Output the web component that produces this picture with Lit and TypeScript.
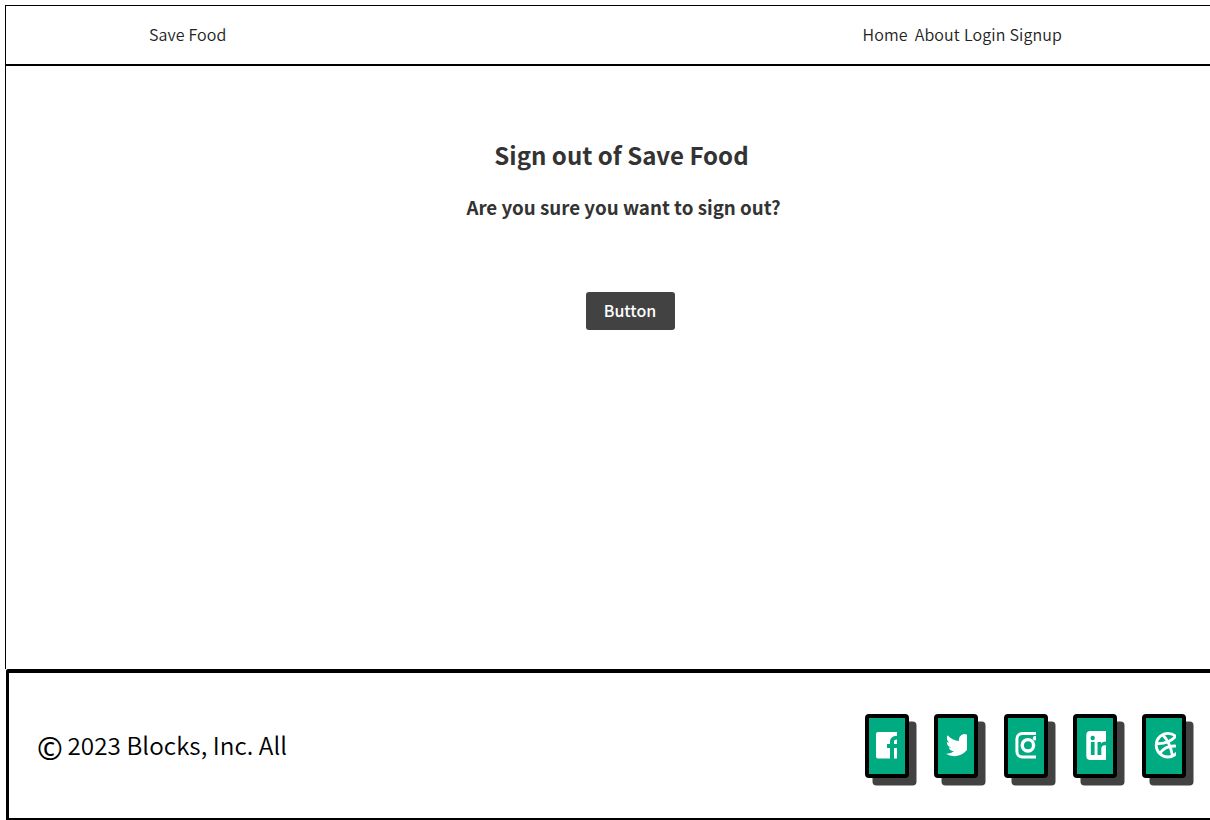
import { LitElement, html, svg, css } from "lit";
import { customElement } from "lit/decorators.js";

const facebook = svg`<path fill="#fff" d="M2 0H24V3.800C18 3 14 5.500 14 9.500V12H11v4h3v10.400H2Q0 26.400 0 24.400V2Q0 0 2 0ZM18 12V10Q18 7.600 21 7.600H24V12ZM18 16H24V26.400H18Z"/>`;
const twitter = svg`<path fill="#fff" transform="translate(.8 -.4) scale(1.128)" d="M23.953 4.570a10 10 0 0 1-2.825.775 4.958 4.958 0 0 0 2.163-2.723 9.990 9.990 0 0 1-3.127 1.184 4.920 4.920 0 0 0-8.384 4.482C7.690 8.095 4.067 6.130 1.640 3.162a4.822 4.822 0 0 0-.666 2.475c0 1.710.870 3.213 2.188 4.096a4.904 4.904 0 0 1-2.228-.616v.060a4.923 4.923 0 0 0 3.946 4.827 4.996 4.996 0 0 1-2.212.085 4.936 4.936 0 0 0 4.604 3.417 9.867 9.867 0 0 1-6.102 2.105c-.390 0-.779-.023-1.170-.067a13.995 13.995 0 0 0 7.557 2.209c9.053 0 13.998-7.496 13.998-13.985 0-.210 0-.420-.015-.630a9.935 9.935 0 0 0 2.460-2.548z"/>`;
const instagram = svg`<g fill="none" stroke="#fff"><rect x="1.900" y="1.500" width="23.500" height="23.500" rx="5.500" stroke-width="3"/><circle cx="12.900" cy="13.300" r="5.700" stroke-width="3.400"/></g><circle cx="20" cy="6.200" r="2.200" fill="#fff"/>`;
const linkedin = svg`<rect x="2.300" y="-1" width="29" height="29" rx="4" fill="#fff"/><g fill="#00ab82"><circle cx="8.700" cy="6" r="2.200"/><path d="M6.900 10h3.700v13H6.900ZM13.500 10h3.600v1.600C18.300 10 19.500 9.500 23 9.500V13.500C19 12.800 17.300 14 17.300 17v6h-3.800Z"/></g>`;
const dribbble = svg`<g fill="none" stroke="#fff" stroke-width="2.800"><circle cx="15" cy="13.200" r="11.800"/><path d="M9.500 2.500Q17.500 11 19.500 24M3 11.500Q15.500 12.500 22.500 4.500M6.500 22Q12.500 12 26.500 14.500"/></g>`;

const links = [
  { icon: facebook, width: 21 },
  { icon: twitter, width: 22 },
  { icon: instagram, width: 21.500 },
  { icon: linkedin, width: 22.300 },
  { icon: dribbble, width: 23 },
];

@customElement("app-root")
export class AppRoot extends LitElement {
  static styles = css`
    :host { display: block; font-family: "Noto Sans CJK SC", "Noto Sans", sans-serif; }
    * { box-sizing: border-box; }
    .page { height: 820px; padding: 5px 0 0 5px; overflow: hidden; display: flex; flex-direction: column; background: #fff; }
    header { height: 61px; flex: none; border: solid #000; border-width: 1px 0 2px 1px; padding: 0 148px 2px 143px; display: flex; align-items: center; justify-content: space-between; font-size: 16px; letter-spacing: .12px; line-height: 24px; font-weight: 350; color: #222; }
    nav { display: flex; gap: 4px; }
    .home { margin-right: 3px; }
    main { flex: 1; border-left: 1px solid #000; display: flex; flex-direction: column; align-items: center; color: #333; }
    h1 { margin: 71px 0 0 27px; font-size: 24.050px; line-height: 36px; font-weight: 700; }
    h2 { margin: 19px 0 0 31px; font-size: 18.750px; line-height: 30px; font-weight: 700; }
    .button { margin: 70px 0 0 44px; width: 89px; height: 38px; padding: 0 0 2px; border: 0; border-radius: 3px; background: #424242; color: #fff; font: 500 16px/24px "Noto Sans CJK SC", sans-serif; }
    footer { height: 151px; flex: none; margin-left: 1px; border: solid #000; border-width: 4px 0 2px 3px; border-radius: 3px 0 0 0; display: flex; justify-content: space-between; padding: 41px 23.800px 0 28px; }
    .copy { display: flex; gap: 6px; font-size: 24.250px; line-height: 38px; font-weight: 350; letter-spacing: .06px; color: #000; padding-top: 12px; white-space: nowrap; }
    .mark { font-family: "Noto Sans", sans-serif; font-size: 31px; line-height: 44px; font-weight: 400; width: 24.500px; }
    .social { display: flex; gap: 25.300px; }
    .tile { width: 44px; height: 64px; border: 4px solid #000; border-radius: 4px; background: #00ab82; box-shadow: 7.500px 7.500px 0 #424242; padding: 13px 7px; }
    .tile svg { display: block; height: 29px; overflow: hidden; }
  `;

  render() {
    return html`<div class="page">
      <header><span class="brand">Save Food</span><nav><span class="home">Home</span><span>About</span><span>Login</span><span>Signup</span></nav></header>
      <main>
        <h1>Sign out of Save Food</h1>
        <h2>Are you sure you want to sign out?</h2>
        <button class="button">Button</button>
      </main>
      <footer>
        <div class="copy"><span class="mark">©</span><span>2023 Blocks, Inc. All</span></div>
        <div class="social">
          ${links.map(
            ({ icon, width }) => html`<div class="tile"><svg width=${width} height="29" viewBox="0 -1 ${width} 29">${icon}</svg></div>`
          )}
        </div>
      </footer>
    </div>`;
  }
}
